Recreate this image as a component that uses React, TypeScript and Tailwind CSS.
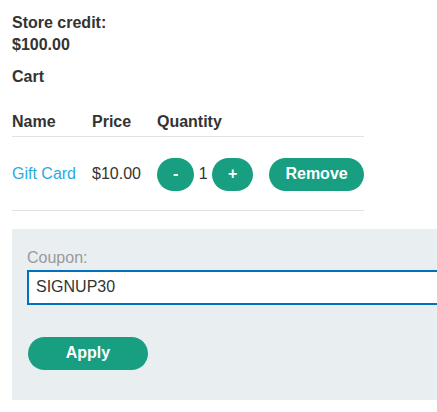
const Btn = ({ children, className = "" }: { children: React.ReactNode; className?: string }) => (
  <button className={`h-[33px] rounded-full bg-[#189e80] px-4 font-bold text-white ${className}`}>{children}</button>
);

export default function App() {
  return (
    <div className="w-screen h-screen overflow-hidden bg-white font-['Liberation_Sans',Arial,sans-serif] text-base leading-[1.4] text-[#333332]">
      <div className="pl-3 pt-[12px]">
        <p className="font-bold">
          Store credit:
          <br />
          $100.00
        </p>
        <p className="mt-[9px] font-bold">Cart</p>

        <table className="mt-[23px] border-collapse text-left">
          <thead>
            <tr className="border-b border-[#e2e2e2]">
              <th className="pr-4 pb-[2px] font-bold">Name</th>
              <th className="pr-4 pb-[2px] font-bold">Price</th>
              <th className="pr-4 pb-[2px] font-bold">Quantity</th>
              <th className="pb-[2px]"></th>
            </tr>
          </thead>
          <tbody>
            <tr className="border-b border-[#e2e2e2]">
              <td className="pr-4 pt-[21px] pb-[19px]">
                <a className="text-[#29abe0]">Gift Card</a>
              </td>
              <td className="pr-4 pt-[21px] pb-[19px]">$10.00</td>
              <td className="pr-4 pt-[21px] pb-[19px] whitespace-nowrap">
                <Btn>-</Btn> 1 <Btn>+</Btn>
              </td>
              <td className="pt-[21px] pb-[19px]">
                <Btn>Remove</Btn>
              </td>
            </tr>
          </tbody>
        </table>

        <div className="mt-[18px] w-[460px] bg-[#e9eef1] pl-[15px] pr-4 pt-[18px] pb-[30px]">
          <label className="block text-[#999999]">Coupon:</label>
          <input
            readOnly
            value="SIGNUP30"
            className="mt-px block h-[35px] w-full border-2 border-[#0071bc] bg-white px-[7px] text-[#333332] outline-none"
          />
          <Btn className="mt-8 ml-px block w-[120px]">Apply</Btn>
        </div>
      </div>
    </div>
  );
}
